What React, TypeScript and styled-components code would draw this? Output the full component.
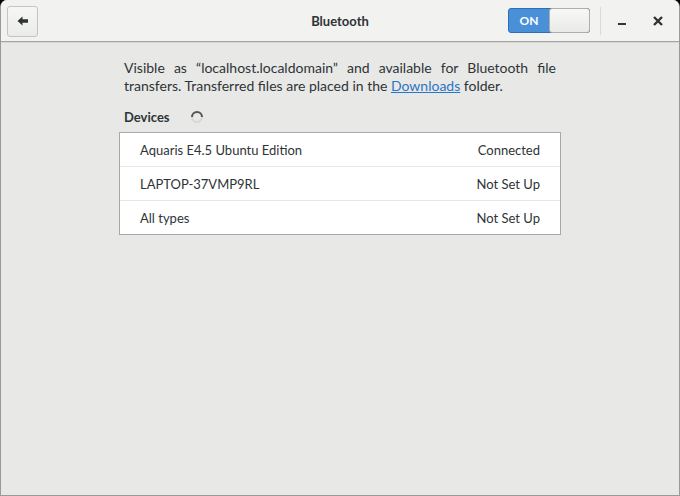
import React from 'react';
import styled, { createGlobalStyle } from 'styled-components';

const Global = createGlobalStyle`
  html, body {
    margin: 0;
    padding: 0;
    background: #000;
  }
  body {
    font-family: Lato, "Open Sans", sans-serif;
    font-size: 13px;
    color: #2e3436;
  }
`;

const Window = styled.div`
  width: 680px;
  height: 496px;
  box-sizing: border-box;
  border: 1px solid #9a9a98;
  border-top: none;
  border-radius: 7px 7px 0 0;
  background: #e8e8e7;
  display: flex;
  flex-direction: column;
  overflow: hidden;
`;

const HeaderBar = styled.header`
  height: 42px;
  box-sizing: border-box;
  background: #f2f2f1;
  border-bottom: 1px solid #a5a5a3;
  box-shadow: 0 1px 0 #d8d8d6;
  display: grid;
  grid-template-columns: 1fr auto 1fr;
  align-items: center;
  padding: 0 6px;
`;

const Side = styled.div<{ $end?: boolean }>`
  display: flex;
  align-items: center;
  justify-content: ${p => (p.$end ? 'flex-end' : 'flex-start')};
`;

const BackButton = styled.button`
  width: 31px;
  height: 31px;
  box-sizing: border-box;
  margin-top: 1px;
  border: 1px solid #c4c4c2;
  border-radius: 3px;
  background: linear-gradient(#f6f6f5, #ebebea);
  display: flex;
  align-items: center;
  justify-content: center;
  padding: 0;
`;

const Title = styled.h1`
  margin: 0;
  font-size: 13px;
  font-weight: bold;
  color: #2e3436;
`;

const Switch = styled.div`
  width: 82px;
  height: 25px;
  box-sizing: border-box;
  border: 1px solid #2a6fb8;
  border-radius: 3px;
  background: #4a90d9;
  display: flex;
  margin-right: 10px;
`;

const SwitchLabel = styled.span`
  flex: 1;
  color: #fff;
  font-size: 12px;
  font-weight: bold;
  display: flex;
  align-items: center;
  justify-content: center;
`;

const SwitchKnob = styled.span`
  width: 41px;
  box-sizing: border-box;
  border: 1px solid #aeaeac;
  border-radius: 3px;
  margin: -1px -1px -1px 0;
  background: linear-gradient(#f8f8f7, #e9e9e8);
`;

const Separator = styled.div`
  width: 1px;
  height: 28px;
  background: #dadad8;
`;

const TitleButton = styled.button`
  width: 30px;
  height: 30px;
  border: none;
  background: transparent;
  display: flex;
  align-items: center;
  justify-content: center;
  padding: 0;
  margin-left: 6px;
`;

const Content = styled.main`
  width: 432px;
  margin: 0 auto;
  padding-top: 17px;
`;

const Description = styled.p`
  margin: 0;
  font-size: 14px;
  line-height: 18px;
  text-align: justify;
  color: #2e3436;

  a {
    color: #2a76c6;
    text-decoration: underline;
  }
`;

const SectionHead = styled.div`
  display: flex;
  align-items: center;
  gap: 20px;
  margin-top: 13px;
  font-weight: bold;
  height: 18px;
`;

const List = styled.div`
  width: 442px;
  margin: 6px 0 0 -5px;
  box-sizing: border-box;
  border: 1px solid #a9a9a7;
  background: #fff;
`;

const Row = styled.div`
  height: 33px;
  padding: 0 20px;
  display: flex;
  align-items: center;
  justify-content: space-between;
  & + & {
    border-top: 1px solid #e7e7e6;
  }
`;

const Spinner = () => (
  <svg width="14" height="14" viewBox="0 0 14 14">
    <circle cx="7" cy="7" r="5" fill="none" stroke="#d6d6d4" strokeWidth="2" />
    <path d="M2 7 A5 5 0 0 1 12 7" fill="none" stroke="#555753" strokeWidth="2" />
  </svg>
);

const devices = [
  { name: 'Aquaris E4.5 Ubuntu Edition', status: 'Connected' },
  { name: 'LAPTOP-37VMP9RL', status: 'Not Set Up' },
  { name: 'All types', status: 'Not Set Up' },
];

export default function App() {
  return (
    <>
      <Global />
      <Window>
        <HeaderBar>
          <Side>
            <BackButton aria-label="Back">
              <svg width="12" height="10" viewBox="0 0 12 10">
                <path d="M0.5 5 L5.5 0.5 L5.5 3.3 L11 3.3 L11 6.7 L5.5 6.7 L5.5 9.5 Z" fill="#2e3436" />
              </svg>
            </BackButton>
          </Side>
          <Title>Bluetooth</Title>
          <Side $end>
            <Switch>
              <SwitchLabel>ON</SwitchLabel>
              <SwitchKnob />
            </Switch>
            <Separator />
            <TitleButton aria-label="Minimize">
              <svg width="10" height="10" viewBox="0 0 10 10">
                <rect x="1" y="7" width="8" height="2" fill="#2e3436" />
              </svg>
            </TitleButton>
            <TitleButton aria-label="Close">
              <svg width="10" height="10" viewBox="0 0 10 10">
                <path d="M1 1 L9 9 M9 1 L1 9" stroke="#2e3436" strokeWidth="2.4" />
              </svg>
            </TitleButton>
          </Side>
        </HeaderBar>
        <Content>
          <Description>
            Visible as “localhost.localdomain” and available for Bluetooth file transfers. Transferred
            files are placed in the <a href="#">Downloads</a> folder.
          </Description>
          <SectionHead>
            <span>Devices</span>
            <Spinner />
          </SectionHead>
          <List>
            {devices.map(d => (
              <Row key={d.name}>
                <span>{d.name}</span>
                <span>{d.status}</span>
              </Row>
            ))}
          </List>
        </Content>
      </Window>
    </>
  );
}
